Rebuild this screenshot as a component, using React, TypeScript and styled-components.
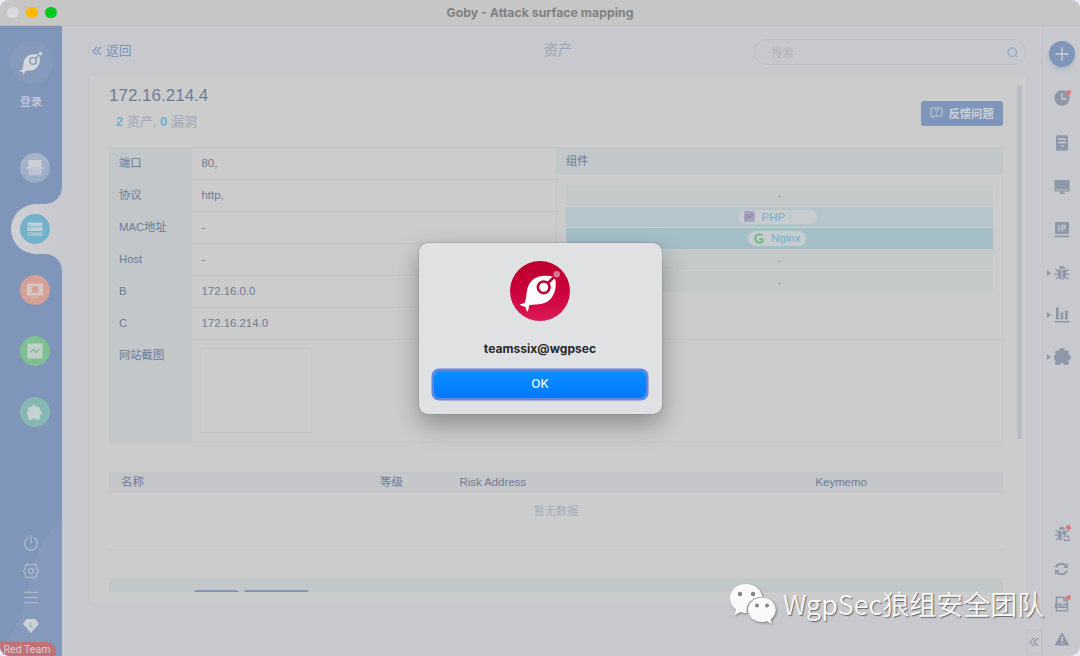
import React from 'react';
import styled, { createGlobalStyle } from 'styled-components';

const Global = createGlobalStyle`
  * { box-sizing: border-box; }
  body { margin: 0; background: #e9e9f3; font-family: "Liberation Sans", "Noto Sans CJK SC", sans-serif; overflow: hidden; }
`;

const Window = styled.div`
  position: relative;
  width: 1080px;
  height: 656px;
  display: flex;
  flex-direction: column;
  background: #c7c9ce;
  border-radius: 9px 9px 10px 10px;
  overflow: hidden;
`;

const TitleBar = styled.header`
  height: 26px;
  flex: none;
  display: grid;
  grid-template-columns: 1fr auto 1fr;
  align-items: center;
  padding: 0 7px;
  background: #c6c6c6;
  border-bottom: 1px solid #bdbdbf;
`;
const Lights = styled.div`
  display: flex;
  gap: 7.5px;
`;
const Light = styled.span<{ $c: string }>`
  width: 11.5px;
  height: 11.5px;
  border-radius: 50%;
  background: ${p => p.$c};
`;
const WindowTitle = styled.div`
  font: 700 12.3px Inter, sans-serif;
  color: #818181;
  white-space: nowrap;
`;

const Body = styled.div`
  flex: 1;
  min-height: 0;
  display: flex;
`;

/* left navigation */
const Sidebar = styled.nav`
  width: 62px;
  flex: none;
  display: flex;
  flex-direction: column;
`;
const SideTop = styled.div`
  height: 178px;
  background: #7f95ba;
  border-bottom-right-radius: 17px;
  display: flex;
  flex-direction: column;
  align-items: center;
  padding-top: 15px;
`;
const Avatar = styled.div`
  width: 43px;
  height: 43px;
  border-radius: 50%;
  background: #879abb;
  display: grid;
  place-items: center;
`;
const LoginText = styled.div`
  margin-top: 9px;
  font-size: 11px;
  line-height: 18px;
  font-weight: 500;
  color: #c5cbd6;
`;
const ActiveSlot = styled.div`
  height: 50px;
  padding-left: 11px;
  background: linear-gradient(90deg, #7f95ba 36px, transparent 36px);
`;
const ActivePill = styled.div`
  height: 50px;
  padding: 10px 0 0 8.5px;
  border-radius: 25px 0 0 25px;
  background: linear-gradient(90deg, #ced0d5, #c7c9ce);
`;
const SideBottom = styled.div`
  position: relative;
  flex: 1;
  background: #7f95ba;
  border-top-right-radius: 17px;
  display: flex;
  flex-direction: column;
`;
const Wave = styled.svg`
  position: absolute;
  left: 0;
  bottom: 0;
`;
const NavDot = styled.div<{ $bg: string }>`
  width: 30px;
  height: 30px;
  border-radius: 50%;
  background: ${p => p.$bg};
  display: grid;
  place-items: center;
`;
const ScanDot = styled(NavDot)`
  margin: 42px 0 0 7px;
`;
const NavDots = styled.div`
  padding: 21px 0 0 19.5px;
  display: flex;
  flex-direction: column;
  gap: 31px;
`;
const SideTools = styled.div`
  position: relative;
  margin-top: 108px;
  display: flex;
  flex-direction: column;
  align-items: center;
  gap: 11.4px;
`;
const Diamond = styled.svg`
  margin-top: 4px;
`;
const TeamTag = styled.div`
  position: relative;
  margin-top: auto;
  width: 56px;
  height: 14px;
  padding-left: 3.5px;
  border-radius: 0 9px 0 0;
  background: #bd7279;
  color: #d8cfd3;
  font: 10.6px/15px Roboto, sans-serif;
  white-space: nowrap;
`;

/* centre column */
const Main = styled.main`
  flex: 1;
  display: flex;
  flex-direction: column;
  padding: 12.5px 16px 0 28px;
`;
const TopRow = styled.div`
  height: 27px;
  display: grid;
  grid-template-columns: 1fr auto 1fr;
  align-items: center;
`;
const Back = styled.div`
  display: flex;
  align-items: center;
  gap: 4.5px;
  padding: 0 0 2px 1.5px;
  font-size: 12.8px;
  line-height: 20px;
  color: #7e94bd;
`;
const PageTitle = styled.div`
  padding-bottom: 4px;
  font-size: 14.3px;
  line-height: 20px;
  color: #9aa5b9;
`;
const Search = styled.div`
  justify-self: end;
  width: 272.5px;
  height: 26.5px;
  padding: 0 7px 0 17px;
  border: 1.5px solid #bcc0c9;
  border-radius: 13px;
  display: flex;
  align-items: center;
  justify-content: space-between;
  font-size: 11px;
  color: #b3b5ba;
`;
const SearchKnob = styled.span`
  display: grid;
  place-items: center;
  width: 12px;
  height: 20px;
`;
const Card = styled.section`
  height: 526px;
  margin-top: 10.5px;
  padding: 9px 4px 10px 19px;
  background: #cccccc;
  display: flex;
  justify-content: space-between;
`;
const Scroll = styled.div`
  width: 894px;
  height: 507px;
  overflow: hidden;
`;
const ScrollThumb = styled.div`
  width: 5px;
  height: 354px;
  background: #b8bcc5;
`;
const HostHead = styled.div`
  height: 62px;
  display: flex;
  justify-content: space-between;
`;
const HostName = styled.div`
  padding-top: 1px;
  font-size: 17px;
  line-height: 20px;
  color: #6d7b98;
`;
const Counts = styled.div`
  padding-left: 7px;
  margin-top: 5.5px;
  font-size: 13px;
  line-height: 20px;
  color: #a0a8b9;
  b { color: #6cb1ce; }
`;
const Feedback = styled.button`
  width: 82.5px;
  height: 25px;
  margin-top: 16px;
  padding: 0 0 2px 9px;
  border: 0;
  border-radius: 3px;
  background: #7f95ba;
  display: flex;
  align-items: center;
  gap: 6px;
  font: bold 11.3px "Liberation Sans", "Noto Sans CJK SC", sans-serif;
  color: #d0d3d9;
  white-space: nowrap;
`;

const Info = styled.div`
  height: 296px;
  display: grid;
  grid-template-columns: 447px 447px;
  grid-template-rows: 192px 103px;
  border: 1px solid #c3c6ca;
  border-width: 1px 1px 1px 0;
`;
const Rows = styled.div`
  display: flex;
  flex-direction: column;
`;
const Row = styled.div<{ $h?: number }>`
  height: ${p => p.$h ?? 32}px;
  display: grid;
  grid-template-columns: 83px 1fr;
  border-bottom: ${p => (p.$h ? 0 : 1)}px solid #c3c6c9;
  font-size: 11.4px;
  line-height: 31px;
  color: #6d7b98;
`;
const Label = styled.div`
  padding-left: 10px;
  font-size: 11.3px;
  background: #c2c7ca;
`;
const Value = styled.div`
  padding-left: 9.5px;
`;
const WideRow = styled.div`
  grid-column: 1 / 3;
`;
const Shot = styled.div`
  width: 112px;
  height: 85px;
  margin: 8px 0 0 -2px;
  border: 1px solid #c3c5c8;
`;
const Parts = styled.div`
  border: 1px solid #c3c6c9;
  border-width: 0 0 1px 1px;
`;
const PartsHead = styled.div`
  height: 27px;
  padding-left: 9px;
  background: #c2c7ca;
  font-size: 11.3px;
  line-height: 27px;
  color: #6d7b98;
`;
const Layers = styled.div`
  padding: 10px 10px 0 9px;
  display: flex;
  flex-direction: column;
  gap: 1px;
`;
const Layer = styled.div<{ $bg?: string }>`
  height: 20.6px;
  background: ${p => p.$bg ?? '#c4c9c9'};
  display: flex;
  align-items: center;
  justify-content: center;
  font-size: 11px;
  color: #8999b5;
`;
const Pill = styled.span<{ $w: number; $shift?: number }>`
  width: ${p => p.$w}px;
  height: 14.5px;
  margin-right: ${p => p.$shift ?? 0}px;
  padding-left: 6px;
  border-radius: 8px;
  background: #c7cccf;
  display: flex;
  align-items: center;
  gap: 7px;
  font-size: 11.5px;
  line-height: 14px;
  color: #6fb0d0;
`;
const PillSplit = styled.i`
  width: 1px;
  height: 14px;
  margin-left: -2px;
  background: #bdc7cd;
`;

const RiskHead = styled.div`
  height: 21px;
  margin-top: 29px;
  padding-left: 12px;
  display: grid;
  grid-template-columns: 259px 79.500px 356px 1fr;
  background: #c4c6ca;
  font-size: 11.4px;
  line-height: 21px;
  color: #6d7b98;
`;
const Empty = styled.div`
  height: 57px;
  border-bottom: 1px solid #c3c5c8;
  text-align: center;
  font-size: 11.2px;
  line-height: 36px;
  color: #a5aebf;
`;
const TabsBar = styled.div`
  height: 30px;
  margin-top: 28px;
  padding: 12px 0 0 84.5px;
  display: flex;
  gap: 5px;
  background: #c2c7ca;
`;
const Tab = styled.span<{ $w: number }>`
  width: ${p => p.$w}px;
  height: 18px;
  border-radius: 3px;
  background: #7f95ba;
`;

/* right tools */
const RightBar = styled.aside`
  width: 38px;
  flex: none;
  border-left: 1px solid #c2c4ca;
  display: flex;
  flex-direction: column;
  color: #8f98a9;
`;
const AddButton = styled.div`
  width: 26px;
  height: 26px;
  margin: 14.5px 0 0 6px;
  flex: none;
  border-radius: 50%;
  background: #7f95ba;
  box-shadow: 0 3px 5px #b0b8c8;
  display: grid;
  place-items: center;
`;
const ToolList = styled.div`
  padding: 20px 0 0 3.5px;
  display: flex;
  flex-direction: column;
  gap: 22px;
`;
const ToolFoot = styled(ToolList)`
  margin-top: auto;
  padding: 0 0 7.5px 3.5px;
  gap: 15px;
`;
const Tool = styled.div<{ $h?: number }>`
  position: relative;
  height: ${p => p.$h ?? 20}px;
  display: flex;
  align-items: center;
  gap: 3px;
`;
const Caret = styled.i<{ $on?: boolean }>`
  border: 3.5px solid transparent;
  border-left: 4px solid ${p => (p.$on ? '#8f98a9' : 'transparent')};
  border-right: 0;
`;
const RedDot = styled.i<{ $top?: number }>`
  position: absolute;
  left: 19px;
  top: ${p => p.$top ?? 1}px;
  width: 5px;
  height: 5px;
  border-radius: 50%;
  background: #dc7b7c;
`;
const Collapse = styled.div`
  position: absolute;
  left: 1026px;
  top: 630px;
  width: 16px;
  height: 24px;
  border: 1px solid #c1c3c9;
  display: grid;
  place-items: center;
`;

/* alert */
const Dialog = styled.div`
  position: absolute;
  left: 418.5px;
  top: 242.5px;
  width: 243px;
  height: 171px;
  padding-top: 18.5px;
  border-radius: 9px;
  background: #dfe1e3;
  box-shadow: 0 0 0 1px rgba(130, 130, 130, .35), 0 10px 26px rgba(0, 0, 0, .32);
  display: flex;
  flex-direction: column;
  align-items: center;
`;
const Message = styled.div`
  margin-top: 18px;
  font: 700 12.1px/20px Inter, sans-serif;
  color: #29292b;
`;
const OkButton = styled.button`
  width: 212px;
  height: 26.5px;
  margin-top: 12px;
  padding: 0 0 1px;
  border: 0;
  border-radius: 5px;
  background: linear-gradient(#0a91ff, #0078ff);
  box-shadow: 0 0 0 2.5px #6486e3;
  color: #f2f8ff;
  font: 500 12px Inter, sans-serif;
`;

const Watermark = styled.div`
  position: absolute;
  left: 729px;
  top: 580px;
  display: flex;
  align-items: center;
  gap: 6px;
  font: 350 27px/48px "Noto Sans CJK SC", sans-serif;
  color: #fafafa;
  white-space: nowrap;
  text-shadow: 1px 1px 1px #666;
`;
const ChatLogo = styled.svg`
  filter: drop-shadow(1px 1px 1px #777);
`;

const Chevrons = ({ size = 10, color = '#7e94bd' }) => (
  <svg width={size} height={size} viewBox="0 0 10 10" fill="none" stroke={color} strokeWidth="1.1">
    <path d="M5 1 1 5l4 4M9 1 5 5l4 4" />
  </svg>
);

const Rocket = ({ size, eye, dot, fill }: { size: number; eye: string; dot: string; fill: string }) => (
  <svg width={size} height={size} viewBox="0 0 60 60">
    <path d="M42.500 15.300C36 14 27 14.500 22 19.500 15.500 26 17.500 33 15 41.500c-1.500 1.300-3.500 1.300-5.300 1.700 1.800 2.300 4.300 1.800 5.800 2.800.5 1.500.5 3.500 2 4.800 1.500-2.300 1-4.800 2-6.800 8.500-1 15.500 0 21-6 5-6 6-13 4.800-19.500z" fill={fill} />
    <circle cx="33.700" cy="26.300" r="5.800" fill="none" stroke={eye} strokeWidth="2.600" />
    <path d="m37.500 22.500 7.500-7.500" stroke={eye} strokeWidth="2.600" />
    <circle cx="46.700" cy="13.300" r="3.300" fill={dot} />
  </svg>
);

const Puzzle = ({ size = 17, fill = 'currentColor' }) => (
  <svg width={size} height={size} viewBox="0 0 16 16" fill={fill}>
    <path d="M1.800 2.800h3.300a2.300 2.300 0 0 1 4.600 0h3.500v3.700a2.200 2.200 0 1 1 0 4.400v4.300H9.500a2 1.500 0 0 0-4 0H1.800v-4.500a1.900 1.900 0 0 1 0-3.800z" stroke={fill} strokeWidth="1" strokeLinejoin="round" />
  </svg>
);

const BugIcon = ({ size = 16, sync = false }) => (
  <svg width={size} height={size} viewBox="0 0 16 16" fill="currentColor" stroke="currentColor">
    <path d="M5 3.700a3 3 0 0 1 6 0z" stroke="none" />
    <path d="M3.900 4.700h3.600v10C5.200 14.200 3.900 12.800 3.900 10.500zM8.500 4.700h3.600v5.800c0 2.300-1.300 3.700-3.600 4.200z" stroke="none" />
    <path d="M4 6.500 1.500 4.200M4 9.200H.5M4.500 12l-2.700 2.300M12 6.500l2.500-2.300" fill="none" strokeWidth="1.300" />
    {sync
      ? <><path d="M8.500 9h7.500v7H8.500z" fill="#c7c9ce" stroke="none" /><path d="M9.500 11.500c1-2 3.500-2 5-.5V9.500M15.500 13c-1 2-3.500 2-5 .8v1.500" fill="none" strokeWidth="1.300" /></>
      : <path d="M12 9.200h3.500M11.500 12l2.700 2.300" fill="none" strokeWidth="1.300" />}
  </svg>
);

const fields: [string, string][] = [
  ['端口', '80,'], ['协议', 'http,'], ['MAC地址', '-'], ['Host', '-'], ['B', '172.16.0.0'], ['C', '172.16.214.0'],
];

export default function App() {
  return (
    <>
      <Global />
      <Window>
        <TitleBar>
          <Lights><Light $c="#d9dadd" /><Light $c="#ffb901" /><Light $c="#00cb1c" /></Lights>
          <WindowTitle>Goby - Attack surface mapping</WindowTitle>
        </TitleBar>
        <Body>
          <Sidebar>
            <SideTop>
              <Avatar><Rocket size={34} eye="#879abb" dot="#d5d7da" fill="#d5d7da" /></Avatar>
              <LoginText>登录</LoginText>
              <ScanDot $bg="linear-gradient(#a9b6ca, #98aac8)">
                <svg width="18" height="16" viewBox="0 0 18 16">
                  <path d="M2.500 0h13v7h-13z" fill="#cdd1d7" /><path d="M2.500 9h13v6.500h-13z" fill="#b9c3d2" /><path d="M.5 8h17" stroke="#d0d4da" strokeWidth="1.500" />
                </svg>
              </ScanDot>
            </SideTop>
            <ActiveSlot>
              <ActivePill>
                <NavDot $bg="#71b1c9">
                  <svg width="16" height="15" viewBox="0 0 16 15">
                    <path d="M.5.500h15v3.800H.5zM.5 5.300h15v3.800H.5z" fill="#bfd1d9" /><path d="M.5 10.200h15V14H.5z" fill="#a3c6d2" />
                    <path d="M2 2.400h1.500M2 7.200h1.500M2 12h1.500" stroke="#71b1c9" />
                  </svg>
                </NavDot>
              </ActivePill>
            </ActiveSlot>
            <SideBottom>
              <Wave width="62" height="140" viewBox="0 0 62 140">
                <path d="M62 6C42 16 32 48 26 80c-4 22-14 38-21 50v10h57z" fill="#8499bc" />
              </Wave>
              <NavDots>
                <NavDot $bg="#d3a196">
                  <svg width="18" height="16" viewBox="0 0 18 16">
                    <path d="M1 1.500h16v12H1z" fill="#d6c6c4" /><path d="M5 15h8" stroke="#d5bab5" />
                    <path d="M6.300 6C6.300 3.700 11.700 3.700 11.700 6v2.500c0 3.300-5.400 3.300-5.400 0zM5 4.500l1.500 1M13 4.500l-1.500 1M4.500 7.500h2M11.500 7.500h2M5 10.800l1.700-1.200M13 10.800l-1.700-1.200" fill="#d3a196" stroke="#d3a196" strokeWidth=".8" />
                  </svg>
                </NavDot>
                <NavDot $bg="#7fc092">
                  <svg width="16" height="16" viewBox="0 0 16 16">
                    <path d="M.5.500h15v15H.5z" fill="#c2d1c8" /><path d="m3.500 9.500 3-3 2.500 3 3.500-3.500" fill="none" stroke="#7fc092" strokeWidth="1.400" />
                  </svg>
                </NavDot>
                <NavDot $bg="#84b8b1"><Puzzle size={15} fill="#c6d2d1" /></NavDot>
              </NavDots>
              <SideTools>
                <svg width="16" height="17" viewBox="0 0 16 17" fill="none" stroke="#b8c1cf" strokeWidth="1.200">
                  <path d="M5 2.800a6.500 6.500 0 1 0 6 0M8 .500v8" />
                </svg>
                <svg width="16" height="16" viewBox="0 0 16 16" fill="none" stroke="#b8c1cf" strokeWidth="1.100" strokeLinejoin="round">
                  <path d="M4.500 1 6.500 1.700h3L11.500 1l2 1.500V5l2 3-2 3v2.500l-2 1.500-2-.7h-3l-2 .7-2-1.500V11l-2-3 2-3V2.500z" /><circle cx="8" cy="8" r="2.500" />
                </svg>
                <svg width="16" height="13" viewBox="0 0 16 13" stroke="#b8c1cf" strokeWidth="1.100">
                  <path d="M1 1.200h14M1 6.500h14M1 11.800h14" />
                </svg>
                <Diamond width="16" height="14" viewBox="0 0 16 14">
                  <path d="M3.500 0h9L16 5l-8 9-8-9z" fill="#ccd1d7" /><path d="M7 3.500v4h2.500" fill="none" stroke="#8da0bf" />
                </Diamond>
              </SideTools>
              <TeamTag>Red Team</TeamTag>
            </SideBottom>
          </Sidebar>

          <Main>
            <TopRow>
              <Back><Chevrons />返回</Back>
              <PageTitle>资产</PageTitle>
              <Search>搜索
                <SearchKnob>
                  <svg width="11" height="11" viewBox="0 0 11 11" fill="none" stroke="#7f9cc2"><circle cx="5.200" cy="5.200" r="4.300" /><path d="m8.500 8.500 1.700 1.700" /></svg>
                </SearchKnob>
              </Search>
            </TopRow>
            <Card>
              <Scroll>
                <HostHead>
                  <div>
                    <HostName>172.16.214.4</HostName>
                    <Counts><b>2</b> 资产, <b>0</b> 漏洞</Counts>
                  </div>
                  <Feedback>
                    <svg width="13" height="12" viewBox="0 0 13 12" fill="none" stroke="#c7cdd8"><path d="M2 1h9q1 0 1 1v6q0 1-1 1H4.500L2.500 10.800V9H2Q1 9 1 8V2q0-1 1-1z" /><path d="M5 3.800c0-1.700 3-1.500 2.800.1C7.700 4.900 6.400 4.800 6.400 6M6.400 6.800v1" /></svg>
                    反馈问题
                  </Feedback>
                </HostHead>
                <Info>
                  <Rows>
                    {fields.map(([k, v]) => <Row key={k}><Label>{k}</Label><Value>{v}</Value></Row>)}
                  </Rows>
                  <Parts>
                    <PartsHead>组件</PartsHead>
                    <Layers>
                      <Layer>-</Layer>
                      <Layer $bg="#b6c5cb">
                        <Pill $w={79} $shift={5}>
                          <svg width="11" height="11" viewBox="0 0 11 11"><path d="M0 0h11v11H0z" fill="#aaa6c5" /><path d="M2 9V3.500l2.500 1V8M5.500 2.500l3 1-1 2.500 1.500 2.500M4 6h3" fill="none" stroke="#858397" /></svg>
                          PHP<PillSplit />
                        </Pill>
                      </Layer>
                      <Layer $bg="#a5bfc9">
                        <Pill $w={58} $shift={5}>
                          <svg width="10" height="11" viewBox="0 0 10 11" fill="none" stroke="#72bd83" strokeWidth="2"><path d="M8.500 2.500C6 0 1.200 1.500 1.200 5.500s5 5.500 7.300 3V6H5.200" /></svg>
                          Nginx
                        </Pill>
                      </Layer>
                      <Layer>-</Layer>
                      <Layer>-</Layer>
                    </Layers>
                  </Parts>
                  <WideRow><Row $h={102.5}><Label>网站截图</Label><Value><Shot /></Value></Row></WideRow>
                </Info>
                <RiskHead><span>名称</span><span>等级</span><span>Risk Address</span><span>Keymemo</span></RiskHead>
                <Empty>暂无数据</Empty>
                <TabsBar><Tab $w={45} /><Tab $w={65} /></TabsBar>
              </Scroll>
              <ScrollThumb />
            </Card>
          </Main>

          <RightBar>
            <AddButton><svg width="14" height="14" viewBox="0 0 14 14" stroke="#ccd1d8" strokeWidth="1.500"><path d="M7 .500v13M.5 7h13" /></svg></AddButton>
            <ToolList>
              <Tool $h={23}><Caret />
                <svg width="16" height="16" viewBox="0 0 16 16"><circle cx="8" cy="8" r="7.700" fill="currentColor" /><path d="M8 3.500V9h4.500" fill="none" stroke="#c7c9ce" strokeWidth="1.400" /></svg>
                <RedDot $top={3.5} />
              </Tool>
              <Tool $h={22}><Caret />
                <svg width="16" height="16" viewBox="0 0 16 16"><rect x="2" y=".3" width="12" height="15.400" rx="1.500" fill="currentColor" /><path d="M4 4h8M4 7.500h8M7 11h2.500" stroke="#c7c9ce" strokeWidth="1.300" /></svg>
              </Tool>
              <Tool $h={22}><Caret />
                <svg width="16" height="16" viewBox="0 0 16 16" fill="currentColor"><path d="M.5 1h15v11.500H.5zM6.500 12.500h3v1.500H11v1H5v-1h1.500z" /><path d="M2 10.800h12" stroke="#c7c9ce" strokeWidth=".8" /></svg>
              </Tool>
              <Tool $h={21}><Caret />
                <svg width="16" height="16" viewBox="0 0 16 16"><path d="M2 0h12q1 0 1 1v11H1V1q0-1 1-1zM.7 13.500h14.600v1.800H.7z" fill="currentColor" /><path d="M5 3v6.500M8 9.500V3.500h2.500q1.500 1.500 0 3H8" fill="none" stroke="#c7c9ce" strokeWidth="1.300" /></svg>
              </Tool>
              <Tool><Caret $on /><BugIcon /></Tool>
              <Tool><Caret $on />
                <svg width="16" height="16" viewBox="0 0 16 16" fill="currentColor"><path d="M2 .500h2.800v12H2zM6.500 5.500h2.800v7H6.500zM11 3.500h2.800v9H11zM.7 14h14.600v1.500H.7z" /></svg>
              </Tool>
              <Tool><Caret $on /><Puzzle /></Tool>
            </ToolList>
            <ToolFoot>
              <Tool><Caret /><BugIcon sync /><RedDot /></Tool>
              <Tool><Caret />
                <svg width="15" height="14" viewBox="0 0 15 14" fill="none" stroke="currentColor" strokeWidth="2"><path d="M1.800 5.500C3.500 1 10 .500 12 4.500M13.200 8.500C11.500 13 5 13.500 3 9.500" /><path d="M14 1v5H9zM1 13V8h5z" fill="currentColor" stroke="none" /></svg>
              </Tool>
              <Tool><Caret />
                <svg width="16" height="16" viewBox="0 0 16 16" fill="none" stroke="currentColor" strokeWidth="1.500"><path d="M10 1.200H2.500v13.600h11V5zM10 1v4h3.500" /><path d="M1 7.500h13v4.500H1z" fill="currentColor" stroke="none" /><path d="M4 8.500v2h2M7.500 10.500v-2h2v2M11 8.500v2h1.500" stroke="#c7c9ce" strokeWidth=".8" /></svg>
                <RedDot />
              </Tool>
              <Tool><Caret />
                <svg width="16" height="14" viewBox="0 0 16 14"><path d="M8 1 14.800 13H1.200z" fill="currentColor" stroke="currentColor" strokeLinejoin="round" /><path d="M8 4.500v5M8 10.500v1.500" stroke="#c7c9ce" strokeWidth="1.500" /></svg>
              </Tool>
            </ToolFoot>
          </RightBar>
        </Body>

        <Collapse><Chevrons size={10} color="#8f98a9" /></Collapse>

        <Watermark>
          <ChatLogo width="48" height="44" viewBox="0 0 48 44">
            <path d="M17 2C8 2 1 8 1 16.500c0 4.500 2 8 6 11L5.500 33l6-3c2 .7 4 1 6.500 1-2-9 6-16.500 15.300-16C32 7 25.500 2 17 2z" fill="#fafafa" />
            <path d="M33 15.500c-8 0-14 5.500-14 12.300S25 40 33 40c2 0 3.500-.3 5-.8l5 2.800-1.300-4.500c3-2.300 5-5.500 5-9.700 0-6.800-6-12.300-13.700-12.300z" fill="#fafafa" />
            <g fill="#808489"><circle cx="11" cy="12" r="2.200" /><circle cx="24" cy="12" r="2.200" /><circle cx="28" cy="23.500" r="1.900" /><circle cx="38" cy="23.500" r="1.900" /></g>
          </ChatLogo>
          <span>WgpSec狼组安全团队</span>
        </Watermark>

        <Dialog>
          <svg width="60" height="60" viewBox="0 0 60 60">
            <defs><linearGradient id="logo" x2="0" y2="1"><stop stopColor="#bd002d" /><stop offset=".5" stopColor="#c9003b" /><stop offset="1" stopColor="#dc1a55" /></linearGradient></defs>
            <circle cx="30" cy="30" r="30" fill="url(#logo)" />
            <Rocket size={60} eye="#c20036" dot="#df7392" fill="#fff" />
          </svg>
          <Message>teamssix@wgpsec</Message>
          <OkButton>OK</OkButton>
        </Dialog>
      </Window>
    </>
  );
}
